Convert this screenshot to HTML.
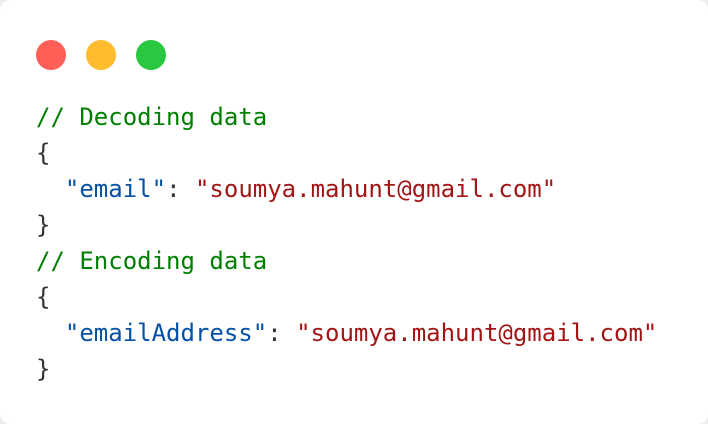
<!DOCTYPE html>
<html><head><style>
html,body{margin:0;padding:0;width:708px;height:424px;background:#ececec;overflow:hidden}
.card{position:absolute;left:0;top:0;width:708px;height:424px;background:#fff;border-radius:10px}
.dot{position:absolute;top:40px;width:30px;height:30px;border-radius:50%}
pre{position:absolute;left:36px;top:99px;margin:0;font-family:"DejaVu Sans Mono","Liberation Mono",monospace;font-size:24px;line-height:36px;color:#333}
.c{color:#008000}.k{color:#0451a5}.s{color:#a31515}
</style></head><body><div class="card">
<div class="dot" style="left:36px;background:#ff5f57"></div>
<div class="dot" style="left:86px;background:#febc2e"></div>
<div class="dot" style="left:136px;background:#28c840"></div>
<pre><span class="c">// Decoding data</span>
{
  <span class="k">"email"</span>: <span class="s">"soumya.mahunt@gmail.com"</span>
}
<span class="c">// Encoding data</span>
{
  <span class="k">"emailAddress"</span>: <span class="s">"soumya.mahunt@gmail.com"</span>
}</pre>
</div></body></html>
